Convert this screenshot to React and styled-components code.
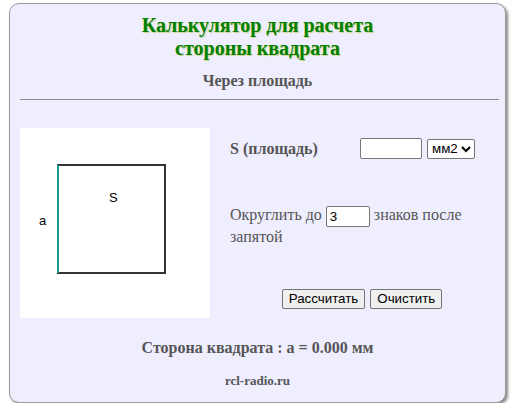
import React from 'react';
import styled, { createGlobalStyle } from 'styled-components';

const serif = '"Liberation Serif", "Times New Roman", serif';
const sans = 'Arial, "Liberation Sans", sans-serif';

const GlobalStyle = createGlobalStyle`
  body {
    margin: 0;
    background: #ffffff;
    font-family: ${serif};
  }
`;

const Page = styled.div`
  padding: 3px 0 0 9px;
`;

const Card = styled.div`
  box-sizing: border-box;
  width: 497px;
  height: 400px;
  border: 1px solid #9a9a9a;
  border-radius: 10px;
  background: #eeeeff;
  box-shadow: 2px 2px 3px #888;
  display: flex;
  flex-direction: column;
`;

const Title = styled.div`
  margin: 0;
  padding-top: 10px;
  font-family: ${serif};
  font-size: 20px;
  line-height: 23px;
  font-weight: bold;
  text-align: center;
  color: #008000;
  text-shadow: 1px 1px 1px #d0d090;
`;

const Subtitle = styled.div`
  margin: 12px 0 0;
  font-family: ${serif};
  font-size: 16px;
  line-height: 18px;
  font-weight: bold;
  text-align: center;
  color: #555;
`;

const Rule = styled.hr`
  margin: 9px 6px 0 10px;
  border: none;
  border-top: 1px solid #8a8a8a;
  height: 0;
`;

const Content = styled.div`
  display: flex;
  gap: 20px;
  margin-top: 28px;
  padding: 0 7px 0 10px;
`;

const Picture = styled.div`
  width: 190px;
  height: 190px;
  background: #ffffff;
  flex: none;
`;

const Form = styled.div`
  flex: 1;
  display: flex;
  flex-direction: column;
  color: #555;
  font-size: 16px;
`;

const FieldRow = styled.div`
  display: flex;
  align-items: center;
  margin-top: 10px;
  height: 21px;
`;

const Label = styled.span`
  width: 130px;
  font-weight: bold;
`;

const TextInput = styled.input`
  box-sizing: border-box;
  width: ${(p) => p.$w}px;
  height: 21px;
  border: 1px solid #767676;
  border-radius: 2px;
  padding: 1px 3px;
  font-family: ${sans};
  font-size: 13.33px;
  color: #000;
  background: #fff;
  vertical-align: middle;
`;

const Unit = styled.select`
  margin-left: 5px;
  height: 20px;
  width: 48px;
  font-family: ${sans};
  font-size: 13.33px;
  color: #000;
  border: 1px solid #767676;
  border-radius: 2px;
  background: #fff;
`;

const RoundText = styled.p`
  margin: 46px 0 0;
  line-height: 20px;
`;

const Buttons = styled.div`
  display: flex;
  justify-content: center;
  gap: 5px;
  margin-top: 42px;
  padding-right: 4px;
`;

const Button = styled.button`
  height: 20px;
  padding: 1px 6px;
  font-family: ${sans};
  font-size: 13.33px;
  color: #000;
  background: #efefef;
  border: 1px solid #767676;
  border-radius: 2px;
`;

const Result = styled.div`
  margin-top: 21px;
  text-align: center;
  font-size: 16px;
  font-weight: bold;
  color: #555;
`;

const Footer = styled.div`
  margin-top: 16px;
  text-align: center;
  font-size: 13px;
  font-weight: bold;
  color: #555;
`;

function SquareDrawing() {
  return (
    <svg width="190" height="190" viewBox="0 0 190 190">
      <rect x="38" y="37" width="107" height="108" fill="none" stroke="#333" strokeWidth="2" />
      <line x1="38" y1="37" x2="38" y2="145" stroke="#1a9e92" strokeWidth="2" />
      <text x="19" y="97" fontFamily={sans} fontSize="13" fill="#000">a</text>
      <text x="89" y="74" fontFamily={sans} fontSize="13" fill="#000">S</text>
    </svg>
  );
}

export default function App() {
  return (
    <>
      <GlobalStyle />
      <Page>
        <Card>
          <Title>
            Калькулятор для расчета
            <br />
            стороны квадрата
          </Title>
          <Subtitle>Через площадь</Subtitle>
          <Rule />
          <Content>
            <Picture>
              <SquareDrawing />
            </Picture>
            <Form>
              <FieldRow>
                <Label>S (площадь)</Label>
                <TextInput $w={62} defaultValue="" />
                <Unit defaultValue="mm2">
                  <option value="mm2">мм2</option>
                  <option value="cm2">см2</option>
                  <option value="m2">м2</option>
                </Unit>
              </FieldRow>
              <RoundText>
                Округлить до <TextInput $w={44} defaultValue="3" /> знаков после запятой
              </RoundText>
              <Buttons>
                <Button>Рассчитать</Button>
                <Button>Очистить</Button>
              </Buttons>
            </Form>
          </Content>
          <Result>Сторона квадрата : а = 0.000 мм</Result>
          <Footer>rcl-radio.ru</Footer>
        </Card>
      </Page>
    </>
  );
}
